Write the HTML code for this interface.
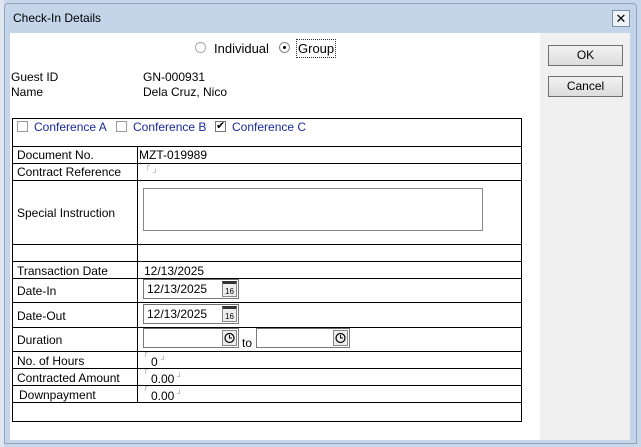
<!DOCTYPE html>
<html><head><style>
*{margin:0;padding:0;box-sizing:border-box}
body{width:641px;height:447px;overflow:hidden;background:#c9d7ea;font-family:"Liberation Sans",sans-serif;font-size:12px;color:#000;position:relative}
.a{position:absolute}
.hl{position:absolute;height:1px;background:#000;left:12px;width:509px}
.lab{position:absolute;left:17px}
.val{position:absolute;left:142px}
.box{position:absolute;border:1px solid #7a7a7a;border-top-color:#6d6d6d;background:#fff;height:20px;padding:2px 3px}
.ic{position:absolute;right:1px;top:1px;width:15px;height:16px;border:1px solid #888;background:#eee;font-size:8px;text-align:center;line-height:9px;padding-top:3px;border-top:3px solid #333}
.ck{position:absolute;right:1px;top:1px;width:15px;height:16px;border:1px solid #888;background:#eee}
.btn{position:absolute;left:548px;width:75px;height:21px;border:1px solid #707070;background:linear-gradient(#f2f2f2,#dcdcdc);text-align:center;line-height:19px}
.mk{position:absolute;font-size:7px;color:#888}
</style></head><body>
<div class="a" style="left:0;top:0;width:4px;height:447px;background:#dfe6ee"></div>
<div class="a" style="left:4px;top:3px;width:633px;height:441px;background:#c4d5ea;border:1px solid #8fa5c2;border-radius:4px 4px 0 0"></div>
<div class="a" style="left:13px;top:11px;font-size:12px">Check-In Details</div>
<div class="a" style="left:612px;top:10px;width:18px;height:17px;border:1px solid #7f8fa6;background:#eef2f8;text-align:center;line-height:15px;font-size:13px">✕</div>
<div class="a" style="left:10px;top:33px;width:530px;height:407px;background:#fff"></div>
<div class="a" style="left:540px;top:33px;width:90px;height:407px;background:#f0f0f0"></div>
<div class="btn" style="top:45px">OK</div>
<div class="btn" style="top:76px">Cancel</div>

<div class="a" style="left:195px;top:42px;width:11px;height:11px;border-radius:50%;border:1px solid #aaa"></div>
<div class="a" style="left:214px;top:41px;font-size:13px">Individual</div>
<div class="a" style="left:279px;top:42px;width:11px;height:11px;border-radius:50%;border:1px solid #888"><div style="margin:3px;width:3px;height:3px;background:#000;border-radius:50%"></div></div>
<div class="a" style="left:296px;top:39px;font-size:13px;border:1px dotted #333;padding:1px 1px;height:19px">Group</div>

<div class="a" style="left:11px;top:70px">Guest ID</div>
<div class="a" style="left:11px;top:85px">Name</div>
<div class="a" style="left:143px;top:70px">GN-000931</div>
<div class="a" style="left:143px;top:85px">Dela Cruz, Nico</div>

<div class="a" style="left:12px;top:118px;width:510px;height:304px;border:1px solid #000"></div>
<div class="a" style="left:137px;top:146px;width:1px;height:256px;background:#000"></div>
<div class="hl" style="top:146px"></div><div class="hl" style="top:163px"></div><div class="hl" style="top:180px"></div>
<div class="hl" style="top:244px"></div><div class="hl" style="top:261px"></div><div class="hl" style="top:278px"></div>
<div class="hl" style="top:302px"></div><div class="hl" style="top:327px"></div><div class="hl" style="top:351px"></div>
<div class="hl" style="top:368px"></div><div class="hl" style="top:385px"></div><div class="hl" style="top:402px"></div>

<div class="a" style="left:17px;top:121px;width:11px;height:11px;border:1px solid #999"></div>
<div class="a" style="left:34px;top:120px;color:#1a2a9c">Conference A</div>
<div class="a" style="left:116px;top:121px;width:11px;height:11px;border:1px solid #999"></div>
<div class="a" style="left:133px;top:120px;color:#1a2a9c">Conference B</div>
<div class="a" style="left:215px;top:121px;width:11px;height:11px;border:1px solid #777;font-size:11px;line-height:9px;text-align:center">✔</div>
<div class="a" style="left:232px;top:120px;color:#1a2a9c">Conference C</div>

<div class="lab" style="top:148px">Document No.</div><div class="val" style="left:139px;top:148px">MZT-019989</div>
<div class="lab" style="top:165px">Contract Reference</div><div class="mk" style="left:145px;top:163px">┌</div><div class="mk" style="left:153px;top:170px">┘</div>
<div class="lab" style="top:206px">Special Instruction</div>
<div class="a" style="left:143px;top:188px;width:340px;height:43px;border:1px solid #888"></div>
<div class="lab" style="top:264px">Transaction Date</div><div class="val" style="left:144px;top:264px">12/13/2025</div>
<div class="lab" style="top:284px">Date-In</div>
<div class="box" style="left:143px;top:279px;width:96px">12/13/2025<div class="ic">16</div></div>
<div class="lab" style="top:309px">Date-Out</div>
<div class="box" style="left:143px;top:304px;width:96px">12/13/2025<div class="ic">16</div></div>
<div class="lab" style="top:333px">Duration</div>
<div class="box" style="left:143px;top:328px;width:96px"><div class="ck"><svg width="13" height="14"><circle cx="6.5" cy="7" r="4.5" fill="none" stroke="#000" stroke-width="1.2"/><path d="M6.5 4v3h2.5" fill="none" stroke="#000"/></svg></div></div>
<div class="a" style="left:242px;top:336px">to</div>
<div class="box" style="left:256px;top:328px;width:94px"><div class="ck"><svg width="13" height="14"><circle cx="6.5" cy="7" r="4.5" fill="none" stroke="#000" stroke-width="1.2"/><path d="M6.5 4v3h2.5" fill="none" stroke="#000"/></svg></div></div>
<div class="lab" style="top:354px">No. of Hours</div><div class="mk" style="left:143px;top:350px">┌</div><div class="val" style="left:151px;top:355px">0</div><div class="mk" style="left:161px;top:357px">┘</div>
<div class="lab" style="top:371px">Contracted Amount</div><div class="mk" style="left:143px;top:367px">┌</div><div class="val" style="left:151px;top:372px">0.00</div><div class="mk" style="left:177px;top:374px">┘</div>
<div class="lab" style="left:19px;top:388px">Downpayment</div><div class="mk" style="left:143px;top:384px">┌</div><div class="val" style="left:151px;top:389px">0.00</div><div class="mk" style="left:177px;top:391px">┘</div>
</body></html>
